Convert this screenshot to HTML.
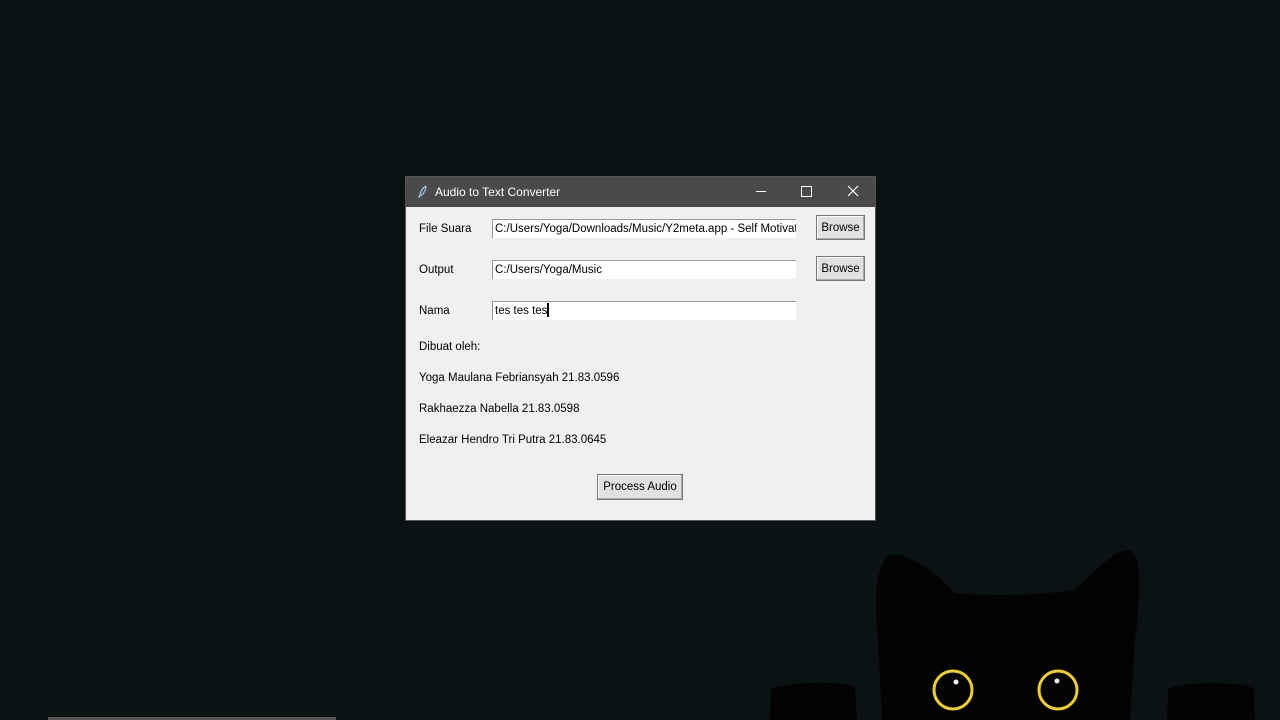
<!DOCTYPE html>
<html><head><style>
body{margin:0;width:1280px;height:720px;background:#0a1214;position:relative;overflow:hidden;font-family:"Liberation Sans",sans-serif;}
.win{position:absolute;left:405px;top:176px;width:471px;height:345px;background:#f0f0f0;border:1px solid #555;box-sizing:border-box;}
.tb{position:absolute;left:0;top:0;width:100%;height:30px;background:#4b4a48;color:#fff;font-size:12px;}
.t{position:absolute;font-size:11.5px;color:#000;margin-top:2px;}
.inp{position:absolute;left:86px;width:304px;height:19px;background:#fff;border-top:1px solid #999;border-left:1px solid #999;box-sizing:border-box;font-size:11.5px;line-height:19px;padding-left:2px;white-space:nowrap;overflow:hidden;}
.btn{position:absolute;background:#e1e1e1;border:1px solid #777;box-shadow:inset -1px -1px #aaa,inset 1px 1px #fff;font-size:11.5px;text-align:center;box-sizing:border-box;}
</style></head><body>
<div class="win">
 <div class="tb">
  <svg style="position:absolute;left:12px;top:8px" width="10" height="14"><path d="M8 1 C4 3 2 8 1 13 M8 1 C8 5 5 10 2 11" stroke="#9bd" fill="none" stroke-width="1.3"/></svg>
  <span style="position:absolute;left:29px;top:8px">Audio to Text Converter</span>
  <div style="position:absolute;left:350px;top:14px;width:10px;height:1px;background:#fff"></div>
  <div style="position:absolute;left:395px;top:9px;width:9px;height:9px;border:1px solid #fff"></div>
  <svg style="position:absolute;left:441px;top:8px" width="12" height="12"><path d="M1 1L11 11M11 1L1 11" stroke="#fff" stroke-width="1.2"/></svg>
 </div>
 <div class="t" style="left:13px;top:44px">File Suara</div>
 <div class="inp" style="top:42px">C:/Users/Yoga/Downloads/Music/Y2meta.app - Self Motivation</div>
 <div class="btn" style="left:410px;top:38px;width:49px;height:25px;line-height:24px">Browse</div>
 <div class="t" style="left:13px;top:85px">Output</div>
 <div class="inp" style="top:83px">C:/Users/Yoga/Music</div>
 <div class="btn" style="left:410px;top:79px;width:49px;height:25px;line-height:24px">Browse</div>
 <div class="t" style="left:13px;top:126px">Nama</div>
 <div class="inp" style="top:124px">tes tes tes<span style="display:inline-block;width:2px;height:14px;background:#000;vertical-align:-3px"></span></div>
 <div class="t" style="left:13px;top:162px">Dibuat oleh:</div>
 <div class="t" style="left:13px;top:193px">Yoga Maulana Febriansyah 21.83.0596</div>
 <div class="t" style="left:13px;top:224px">Rakhaezza Nabella 21.83.0598</div>
 <div class="t" style="left:13px;top:255px">Eleazar Hendro Tri Putra 21.83.0645</div>
 <div class="btn" style="left:191px;top:297px;width:86px;height:26px;line-height:25px">Process Audio</div>
</div>
<svg style="position:absolute;left:0;top:0" width="1280" height="720">
 <path d="M882 720 L878 640 C874 600 875 565 890 555 C905 550 940 575 955 593 C990 596 1030 596 1075 590 C1100 565 1120 546 1132 551 C1142 560 1140 600 1135 640 L1130 720 Z" fill="#030303"/>
 <path d="M770 720 L771 690 C775 682 850 680 855 688 L857 720Z" fill="#030303"/>
 <path d="M1167 720 L1168 690 C1172 682 1250 680 1254 690 L1255 720Z" fill="#030303"/>
 <circle cx="953" cy="690" r="19" fill="none" stroke="#f0d020" stroke-width="3"/>
 <circle cx="1058" cy="690" r="19" fill="none" stroke="#f0d020" stroke-width="3"/>
 <circle cx="956" cy="682" r="2.5" fill="#eee"/>
 <circle cx="1057" cy="681" r="2.5" fill="#eee"/>
 <rect x="48" y="717" width="288" height="3" fill="#555"/>
</svg>
</body></html>
